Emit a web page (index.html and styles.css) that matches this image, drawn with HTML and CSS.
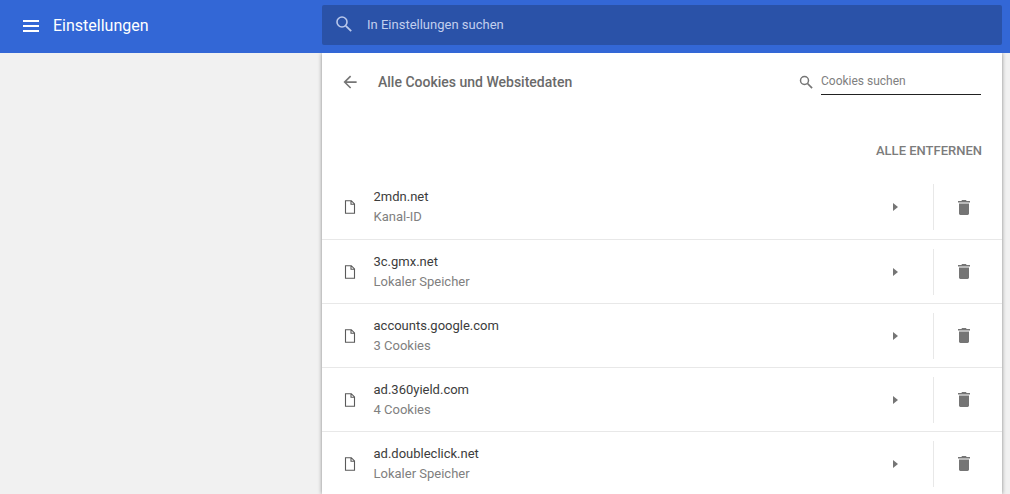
FILE: index.html
```html
<!DOCTYPE html>
<html lang="de">
<head>
  <meta charset="UTF-8" />
  <meta name="viewport" content="width=device-width, initial-scale=1.0" />
  <title>Einstellungen</title>
  <link rel="stylesheet" href="styles.css">
</head>
<body>
  <header class="toolbar">
    <div class="toolbar-left">
      <svg class="menu-icon" width="16" height="12" viewBox="0 0 16 12"><path d="M0 0h16v2H0zM0 5h16v2H0zM0 10h16v2H0z" fill="#fff"/></svg>
      <span class="toolbar-title">Einstellungen</span>
    </div>
    <div class="main-search">
      <svg class="main-search-icon" width="18" height="18" viewBox="0 0 18 18"><circle cx="7" cy="7" r="5" fill="none" stroke="#b9c8ec" stroke-width="1.6"/><path d="M10.8 10.8l5.4 5.4" stroke="#b9c8ec" stroke-width="1.8"/></svg>
      <span class="main-search-text">In Einstellungen suchen</span>
    </div>
  </header>

  <main class="page">
    <section class="card">
      <div class="card-head">
        <svg class="back-icon" width="16" height="16" viewBox="0 0 16 16"><path d="M16 7H3.8l5.6-5.6L8 0 0 8l8 8 1.4-1.4L3.8 9H16z" fill="#757575" transform="translate(1.5 1.5) scale(.82)"/></svg>
        <h1 class="card-title">Alle Cookies und Websitedaten</h1>
        <div class="cookie-search">
          <svg width="14" height="14" viewBox="0 0 14 14"><circle cx="5.5" cy="5.5" r="4" fill="none" stroke="#757575" stroke-width="1.5"/><path d="M8.5 8.5l4.6 4.6" stroke="#757575" stroke-width="1.7"/></svg>
          <span class="cookie-search-field">Cookies suchen</span>
        </div>
      </div>

      <div class="remove-all-row"><span class="remove-all">ALLE ENTFERNEN</span></div>

      <ul class="site-list">
        <li class="site-row">
          <svg class="file-icon" width="12" height="14" viewBox="0 0 12 14"><path d="M1.5.7h5.8l3.2 3.2v9.4h-9zM7 .7v3.6h3.5" fill="none" stroke="#5a5a5a" stroke-width="1.1"/></svg>
          <div class="site-text"><div class="site-name">2mdn.net</div><div class="site-desc">Kanal-ID</div></div>
          <svg class="arrow" width="5" height="8" viewBox="0 0 5 8"><path d="M0 0l5 4-5 4z" fill="#757575"/></svg>
          <div class="divider"></div>
          <div class="trash-cell"><svg width="12" height="15" viewBox="0 0 12 15"><path d="M4 0h4l.6 1H12v1.6H0V1h3.4zM1 3.6h10v10c0 .8-.6 1.4-1.4 1.4H2.4c-.8 0-1.4-.6-1.4-1.4z" fill="#757575"/></svg></div>
        </li>
        <li class="site-row">
          <svg class="file-icon" width="12" height="14" viewBox="0 0 12 14"><path d="M1.5.7h5.8l3.2 3.2v9.4h-9zM7 .7v3.6h3.5" fill="none" stroke="#5a5a5a" stroke-width="1.1"/></svg>
          <div class="site-text"><div class="site-name">3c.gmx.net</div><div class="site-desc">Lokaler Speicher</div></div>
          <svg class="arrow" width="5" height="8" viewBox="0 0 5 8"><path d="M0 0l5 4-5 4z" fill="#757575"/></svg>
          <div class="divider"></div>
          <div class="trash-cell"><svg width="12" height="15" viewBox="0 0 12 15"><path d="M4 0h4l.6 1H12v1.6H0V1h3.4zM1 3.6h10v10c0 .8-.6 1.4-1.4 1.4H2.4c-.8 0-1.4-.6-1.4-1.4z" fill="#757575"/></svg></div>
        </li>
        <li class="site-row">
          <svg class="file-icon" width="12" height="14" viewBox="0 0 12 14"><path d="M1.5.7h5.8l3.2 3.2v9.4h-9zM7 .7v3.6h3.5" fill="none" stroke="#5a5a5a" stroke-width="1.1"/></svg>
          <div class="site-text"><div class="site-name">accounts.google.com</div><div class="site-desc">3 Cookies</div></div>
          <svg class="arrow" width="5" height="8" viewBox="0 0 5 8"><path d="M0 0l5 4-5 4z" fill="#757575"/></svg>
          <div class="divider"></div>
          <div class="trash-cell"><svg width="12" height="15" viewBox="0 0 12 15"><path d="M4 0h4l.6 1H12v1.6H0V1h3.4zM1 3.6h10v10c0 .8-.6 1.4-1.4 1.4H2.4c-.8 0-1.4-.6-1.4-1.4z" fill="#757575"/></svg></div>
        </li>
        <li class="site-row">
          <svg class="file-icon" width="12" height="14" viewBox="0 0 12 14"><path d="M1.5.7h5.8l3.2 3.2v9.4h-9zM7 .7v3.6h3.5" fill="none" stroke="#5a5a5a" stroke-width="1.1"/></svg>
          <div class="site-text"><div class="site-name">ad.360yield.com</div><div class="site-desc">4 Cookies</div></div>
          <svg class="arrow" width="5" height="8" viewBox="0 0 5 8"><path d="M0 0l5 4-5 4z" fill="#757575"/></svg>
          <div class="divider"></div>
          <div class="trash-cell"><svg width="12" height="15" viewBox="0 0 12 15"><path d="M4 0h4l.6 1H12v1.6H0V1h3.4zM1 3.6h10v10c0 .8-.6 1.4-1.4 1.4H2.4c-.8 0-1.4-.6-1.4-1.4z" fill="#757575"/></svg></div>
        </li>
        <li class="site-row">
          <svg class="file-icon" width="12" height="14" viewBox="0 0 12 14"><path d="M1.5.7h5.8l3.2 3.2v9.4h-9zM7 .7v3.6h3.5" fill="none" stroke="#5a5a5a" stroke-width="1.1"/></svg>
          <div class="site-text"><div class="site-name">ad.doubleclick.net</div><div class="site-desc">Lokaler Speicher</div></div>
          <svg class="arrow" width="5" height="8" viewBox="0 0 5 8"><path d="M0 0l5 4-5 4z" fill="#757575"/></svg>
          <div class="divider"></div>
          <div class="trash-cell"><svg width="12" height="15" viewBox="0 0 12 15"><path d="M4 0h4l.6 1H12v1.6H0V1h3.4zM1 3.6h10v10c0 .8-.6 1.4-1.4 1.4H2.4c-.8 0-1.4-.6-1.4-1.4z" fill="#757575"/></svg></div>
        </li>
      </ul>
    </section>
  </main>
</body>
</html>
```

FILE: styles.css
```css
html, body {
  height: 100%;
}

body {
  margin: 0;
  overflow: hidden;
  display: flex;
  flex-direction: column;
  background: #f1f1f1;
  font-family: Roboto, "Liberation Sans", sans-serif;
  font-size: 13px;
}

.toolbar {
  height: 53px;
  flex: none;
  display: flex;
  align-items: center;
  background: #3367d6;
}

.toolbar-left {
  width: 322px;
  display: flex;
  align-items: center;
  padding-left: 23px;
  box-sizing: border-box;
  margin-top: -2px;
}

.toolbar-title {
  margin-left: 14px;
  color: #fff;
  font-size: 16px;
  font-weight: 400;
}

.main-search {
  width: 680px;
  height: 40px;
  margin-top: -3px;
  display: flex;
  align-items: center;
  padding: 0 0 2px 13px;
  box-sizing: border-box;
  background: #2a52a8;
  border-radius: 2px;
}

.main-search-text {
  margin-left: 14px;
  color: #c2cfee;
  font-size: 13px;
  font-weight: 400;
}

.page {
  flex: 1;
  min-height: 0;
  padding-left: 322px;
}

.card {
  width: 680px;
  height: 100%;
  background: #fff;
  box-shadow: 0 0 4px rgba(0, 0, 0, 0.45);
  clip-path: inset(0 -8px 0 -8px);
}

.card-head {
  height: 58px;
  display: flex;
  align-items: center;
  padding: 0 21px 0 20px;
}

.card-title {
  flex: 1;
  margin: 0 0 0 20px;
  color: #6a6a6a;
  font-size: 14px;
  font-weight: 500;
}

.cookie-search {
  display: flex;
  align-items: center;
  gap: 8px;
}

.cookie-search-field {
  width: 160px;
  height: 26px;
  box-sizing: border-box;
  border-bottom: 1px solid #212121;
  color: #808080;
  font-size: 12px;
  line-height: 24px;
}

.remove-all-row {
  height: 64px;
  box-sizing: border-box;
  padding: 32px 20px 0 0;
  text-align: right;
}

.remove-all {
  color: #7c7c7c;
  font-size: 13px;
  font-weight: 500;
}

.site-list {
  list-style: none;
  margin: 0;
  padding: 0;
}

.site-row {
  height: 64px;
  box-sizing: border-box;
  display: flex;
  align-items: center;
  padding-left: 22px;
  border-top: 1px solid #e8e8e8;
}

.site-row:first-child {
  border-top: none;
}

.file-icon {
  flex: none;
}

.site-text {
  flex: 1;
  margin-left: 17.5px;
  line-height: 20px;
}

.site-name {
  color: #3c3c3c;
}

.site-desc {
  color: #808080;
}

.arrow {
  flex: none;
  margin-right: 35px;
}

.divider {
  width: 1px;
  height: 46px;
  flex: none;
  background: #e8e8e8;
}

.trash-cell {
  width: 68px;
  flex: none;
  display: flex;
  justify-content: center;
  padding-right: 8px;
  box-sizing: border-box;
}
```
